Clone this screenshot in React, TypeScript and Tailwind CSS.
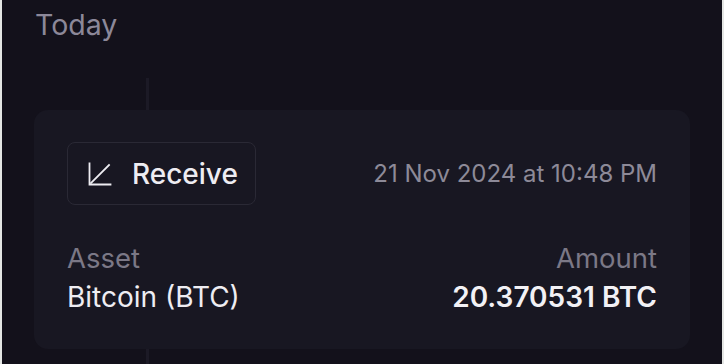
import React from 'react';

const ReceiveIcon: React.FC = () => (
  <svg className="w-6 h-6 text-[#eeedf2]" viewBox="0 0 24 24" fill="none" stroke="currentColor" strokeWidth={1.8} strokeLinecap="square">
    <path d="M1.5 1.5V22.5H22.5" />
    <path d="M21 3L3 21" />
  </svg>
);

const App: React.FC = () => {
  return (
    <div className="flex w-[724px] h-[364px] bg-[#e4e6e4] px-[2px] font-['Inter','Noto_Sans',sans-serif]">
      <div className="flex flex-col flex-1 bg-[#13111b] overflow-hidden">
        {/* Day header */}
        <div className="pt-[8px] pl-[33px] text-[28.5px] leading-[34px] text-[#8c8899]">Today</div>

        {/* Timeline segment above card */}
        <div className="ml-[144px] mt-[36px] w-[3px] h-[32px] bg-[#1c1a26]"></div>

        {/* Transaction card */}
        <div className="ml-[32px] w-[656px] h-[239px] bg-[#181722] rounded-[14px] pt-[32px] px-[33px]">
          <div className="flex items-center justify-between">
            <div className="flex items-center h-[63px] pl-[20px] pr-[17px] border border-[#2a2935] rounded-[8px]">
              <ReceiveIcon />
              <span className="ml-[20px] text-[28px] leading-[34px] font-medium text-[#eeedf2]">Receive</span>
            </div>
            <span className="text-[24px] leading-[32px] text-[#8d8a98]">21 Nov 2024 at 10:48 PM</span>
          </div>

          <div className="flex justify-between mt-[36px]">
            <div className="flex flex-col">
              <span className="text-[27.5px] leading-[34px] text-[#7b7886]">Asset</span>
              <span className="mt-[5px] text-[28px] leading-[34px] text-[#eeedf2]">Bitcoin (BTC)</span>
            </div>
            <div className="flex flex-col items-end">
              <span className="text-[27.5px] leading-[34px] text-[#7b7886]">Amount</span>
              <span className="mt-[5px] text-[28px] leading-[34px] font-semibold text-[#f2f1f5]">20.370531 BTC</span>
            </div>
          </div>
        </div>

        {/* Timeline segment below card */}
        <div className="ml-[144px] w-[3px] flex-1 bg-[#1c1a26]"></div>
      </div>
    </div>
  );
};

export default App;
